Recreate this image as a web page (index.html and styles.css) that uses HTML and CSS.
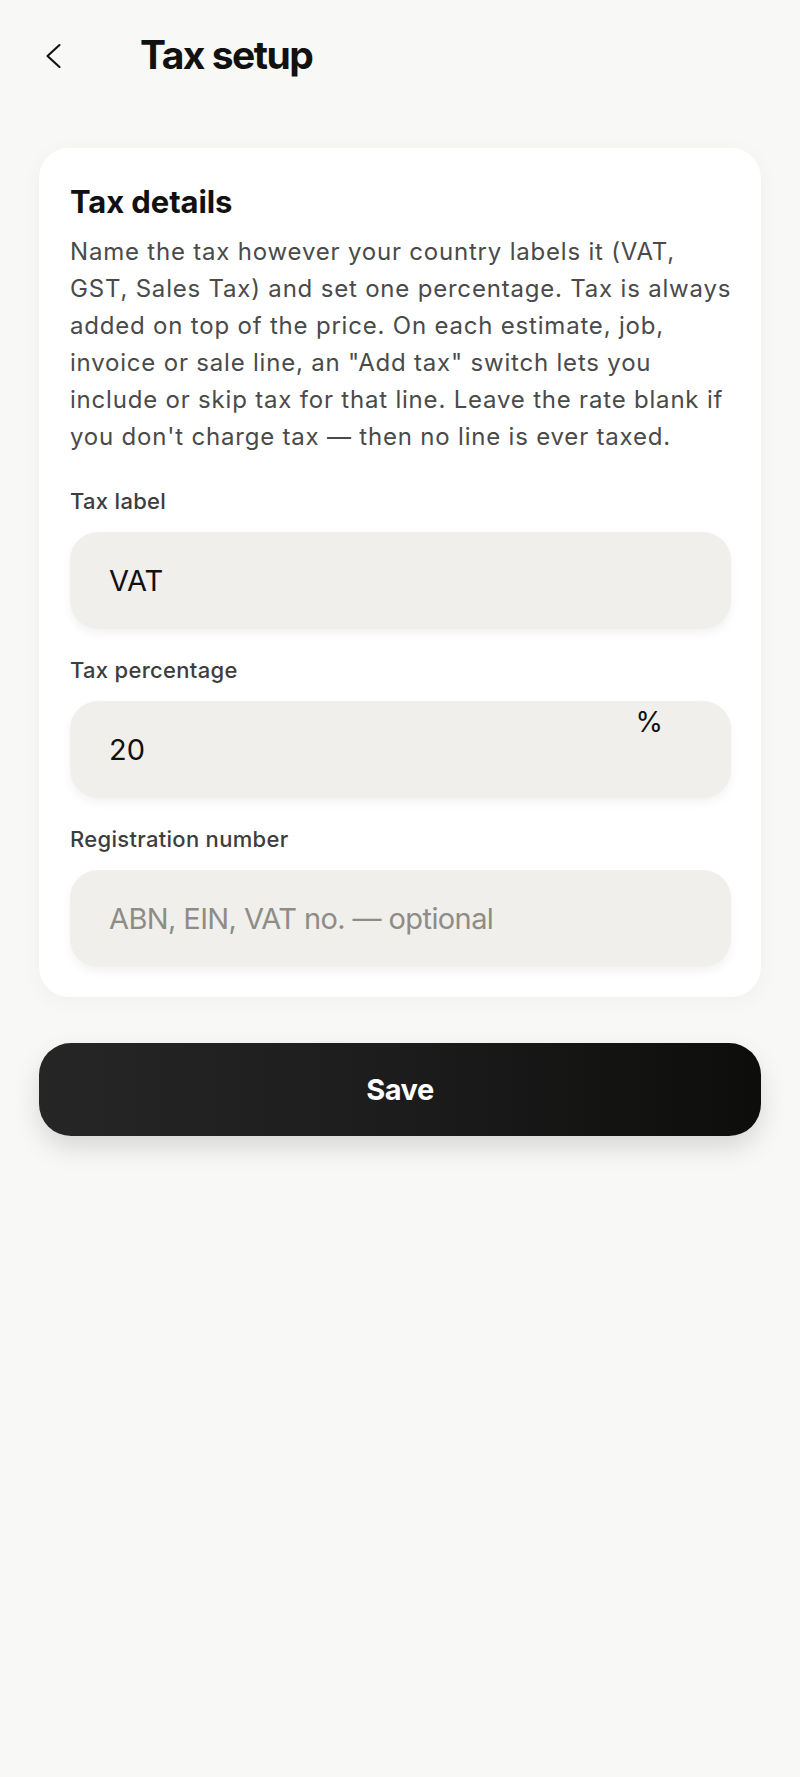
FILE: index.html
```html
<!DOCTYPE html>
<html lang="en">
<head>
<meta charset="utf-8">
<title>Tax setup</title>
<link rel="stylesheet" href="styles.css">
</head>
<body>
<header class="topbar">
  <button class="back" aria-label="Back">
    <svg width="28" height="28" viewBox="0 0 28 28" fill="none"><path d="M19.5 3 L7.5 14 L19.5 25" stroke="#111" stroke-width="2.1" stroke-linecap="round" stroke-linejoin="round"/></svg>
  </button>
  <h1 class="title">Tax setup</h1>
</header>
<main class="content">
  <section class="card">
    <h2 class="card-title">Tax details</h2>
    <p class="card-text">Name the tax however your country labels it (VAT, GST, Sales Tax) and set one percentage. Tax is always added on top of the price. On each estimate, job, invoice or sale line, an "Add tax" switch lets you include or skip tax for that line. Leave the rate blank if you don't charge tax — then no line is ever taxed.</p>
    <div class="field">
      <label class="field-label" for="label">Tax label</label>
      <div class="input-wrap"><input class="input" id="label" value="VAT"></div>
    </div>
    <div class="field">
      <label class="field-label" for="rate">Tax percentage</label>
      <div class="input-wrap"><input class="input" id="rate" value="20"><span class="suffix">%</span></div>
    </div>
    <div class="field">
      <label class="field-label" for="reg">Registration number</label>
      <div class="input-wrap"><input class="input" id="reg" placeholder="ABN, EIN, VAT no. — optional"></div>
    </div>
  </section>
  <button class="save">Save</button>
</main>
</body>
</html>
```
FILE: styles.css
```css
* { box-sizing: border-box; }
html, body { margin: 0; }
body {
  background: #f8f8f6;
  font-family: Inter, "Noto Sans", sans-serif;
  color: #111;
  min-height: 1777px;
}
.topbar {
  display: flex;
  align-items: center;
  padding: 31px 0 0 40px;
  gap: 72px;
}
.back {
  width: 28px;
  height: 28px;
  padding: 0;
  border: 0;
  background: none;
  display: flex;
  margin-top: 3px;
}
.title {
  margin: 0;
  font-size: 39px;
  line-height: 47px;
  font-weight: 700;
  letter-spacing: -1.5px;
  color: #111;
}
.content {
  padding: 70px 39px 0;
}
.card {
  background: #fff;
  border-radius: 30px;
  padding: 35px 30px 30px 31px;
  box-shadow: 0 4px 22px rgba(0, 0, 0, 0.035);
}
.card-title {
  margin: 0 0 13px;
  font-size: 31px;
  line-height: 37px;
  font-weight: 700;
  letter-spacing: -0.1px;
  color: #111;
}
.card-text {
  margin: 0 -6px 31px 0;
  font-size: 24px;
  line-height: 37px;
  color: #4a4a4a;
  letter-spacing: 0.8px;
}
.field + .field { margin-top: 26px; }
.field-label {
  display: block;
  font-size: 22px;
  line-height: 30px;
  font-weight: 500;
  color: #3d3d3d;
  letter-spacing: 0.3px;
  margin-bottom: 16px;
}
.input-wrap { position: relative; }
.input {
  display: block;
  width: 100%;
  height: 97px;
  border: 0;
  border-radius: 28px;
  background: #f0efeb;
  padding: 0 39px;
  font-family: Inter, "Noto Sans", sans-serif;
  font-size: 29px;
  color: #111;
  outline: none;
  box-shadow: 0 5px 10px rgba(0, 0, 0, 0.05);
}
.input::placeholder {
  color: #8e8c87;
  letter-spacing: -0.6px;
}
.suffix {
  position: absolute;
  top: 6px;
  right: 68px;
  font-size: 28px;
  line-height: 30px;
  color: #111;
}
.save {
  display: block;
  width: 100%;
  height: 93px;
  margin-top: 46px;
  border: 0;
  border-radius: 32px;
  background: linear-gradient(90deg, #262626 0%, #1c1c1c 50%, #0d0d0c 100%);
  color: #fff;
  font-family: Inter, "Noto Sans", sans-serif;
  font-size: 29px;
  font-weight: 700;
  letter-spacing: -0.5px;
  box-shadow: 0 12px 26px rgba(0, 0, 0, 0.13);
}
```
